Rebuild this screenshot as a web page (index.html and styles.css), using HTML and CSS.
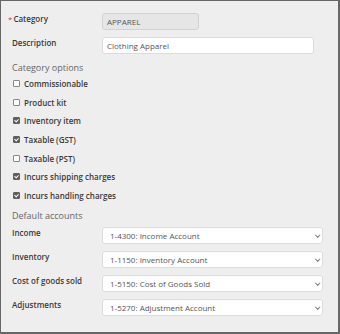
FILE: index.html
```html
<!DOCTYPE html>
<html lang="en">
  <head>
    <meta charset="UTF-8" />
    <meta name="viewport" content="width=device-width, initial-scale=1.0" />
    <title>Category</title>
    <link rel="stylesheet" href="styles.css">
  </head>
  <body>
    <div class="panel">
      <div class="field">
        <label class="label required">Category</label>
        <div class="input readonly short">APPAREL</div>
      </div>
      <div class="field">
        <label class="label">Description</label>
        <input class="input medium" type="text" value="Clothing Apparel" />
      </div>

      <h3 class="section">Category options</h3>
      <ul class="checks">
        <li><span class="box"></span>Commissionable</li>
        <li><span class="box"></span>Product kit</li>
        <li><span class="box checked"></span>Inventory item</li>
        <li><span class="box checked"></span>Taxable (GST)</li>
        <li><span class="box"></span>Taxable (PST)</li>
        <li><span class="box checked"></span>Incurs shipping charges</li>
        <li><span class="box checked"></span>Incurs handling charges</li>
      </ul>

      <h3 class="section section-accounts">Default accounts</h3>
      <div class="field account">
        <label class="label">Income</label>
        <div class="select-wrap">
          <select class="input"><option>1-4300: Income Account</option></select>
          <span class="chevron"></span>
        </div>
      </div>
      <div class="field account">
        <label class="label">Inventory</label>
        <div class="select-wrap">
          <select class="input"><option>1-1150: Inventory Account</option></select>
          <span class="chevron"></span>
        </div>
      </div>
      <div class="field account">
        <label class="label">Cost of goods sold</label>
        <div class="select-wrap">
          <select class="input"><option>1-5150: Cost of Goods Sold</option></select>
          <span class="chevron"></span>
        </div>
      </div>
      <div class="field account">
        <label class="label">Adjustments</label>
        <div class="select-wrap">
          <select class="input"><option>1-5270: Adjustment Account</option></select>
          <span class="chevron"></span>
        </div>
      </div>
    </div>
  </body>
</html>
```

FILE: styles.css
```css
* {
  box-sizing: border-box;
}

body {
  margin: 0;
  font-family: "Open Sans", "Liberation Sans", sans-serif;
  color: #3a3a3a;
}

.panel {
  width: 340px;
  height: 334px;
  background: #eeeeee;
  border-style: solid;
  border-color: #666;
  border-width: 1px 2px 2px 1px;
  padding: 12px 0 0 11px;
}

.field {
  display: flex;
  align-items: flex-start;
  height: 17px;
  margin-bottom: 7px;
}

.label {
  width: 90px;
  flex-shrink: 0;
  font-size: 8px;
  font-weight: 600;
  line-height: 12px;
  color: #3a3a3a;
}

.required::before {
  content: "*";
  color: #d9363e;
  font-weight: 400;
  margin-left: -4px;
  margin-right: 1px;
}

.input {
  height: 17px;
  border: 1px solid #dcdcdc;
  border-radius: 3px;
  background: #fff;
  font-family: inherit;
  font-size: 8px;
  color: #555;
  padding: 0 4px;
  line-height: 15px;
  margin: 0;
  outline: none;
}

.readonly {
  background: #e6e6e6;
  border-color: #d2d2d2;
}

.short {
  width: 97px;
}

.medium {
  width: 212px;
}

.section {
  margin: 6px 0 0;
  font-size: 9px;
  font-weight: 400;
  line-height: 14px;
  color: #666;
}

.checks {
  list-style: none;
  margin: -1px 0 0;
  padding: 0;
}

.checks li {
  display: flex;
  align-items: center;
  height: 18.7px;
  font-size: 8px;
  font-weight: 600;
  color: #3a3a3a;
}

.box {
  width: 7px;
  height: 7px;
  margin: 0 4px 0 1px;
  border: 1px solid #888;
  border-radius: 1px;
  background: #fff;
  position: relative;
}

.box.checked {
  background: #5e5e5e;
  border-color: #5e5e5e;
}

.box.checked::after {
  content: "";
  position: absolute;
  left: 1px;
  top: 0;
  width: 2px;
  height: 3px;
  border: solid #fff;
  border-width: 0 1px 1px 0;
  transform: rotate(45deg);
}

.section-accounts {
  margin-top: 4px;
}

.section-accounts + .account {
  margin-top: 4px;
}

.select-wrap {
  position: relative;
  width: 221px;
  height: 17px;
}

.select-wrap select {
  display: block;
  width: 100%;
  padding: 0 7px;
  appearance: none;
  -webkit-appearance: none;
}

.chevron {
  position: absolute;
  right: 4px;
  top: 6px;
  width: 3.5px;
  height: 3.5px;
  border: solid #777;
  border-width: 0 1.2px 1.2px 0;
  transform: rotate(45deg);
}
```
